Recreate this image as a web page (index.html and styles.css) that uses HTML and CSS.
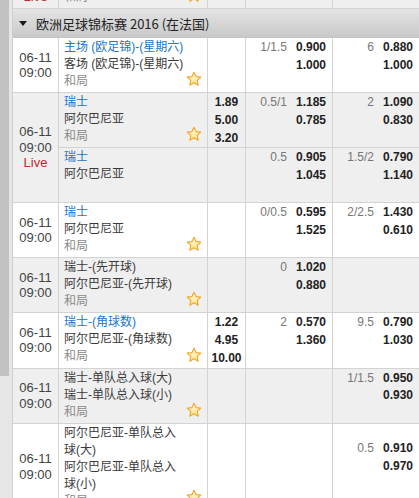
FILE: index.html
```html
<!DOCTYPE html>
<html lang="zh-CN">
<head>
<meta charset="utf-8">
<title>赛事列表</title>
<link rel="stylesheet" href="styles.css">
</head>
<body>
<svg class="sprite" width="0" height="0" aria-hidden="true">
  <defs>
    <linearGradient id="starfill" x1="0" y1="0" x2="0" y2="1">
      <stop offset="0" stop-color="#fffdf0"/>
      <stop offset="1" stop-color="#ffe27a"/>
    </linearGradient>
    <symbol id="star" viewBox="0 0 16 16">
      <path d="M8 1.2 L10 5.6 L14.8 6.1 L11.2 9.3 L12.2 14.2 L8 11.7 L3.8 14.2 L4.8 9.3 L1.2 6.1 L6 5.6 Z" fill="url(#starfill)" stroke="#f2a52b" stroke-width="1.1" stroke-linejoin="round"/>
    </symbol>
  </defs>
</svg>
<div class="page">
  <div class="rail"><div class="thumb"></div></div>
  <div class="table">

    <div class="row gray">
      <div class="date"><span>06-11</span><span>09:00</span><span class="live">Live</span></div>
      <div class="c team"><div class="names"><span class="home">瑞士</span><span class="away">阿尔巴尼亚</span><span class="draw">和局</span></div><svg class="star"><use href="#star"/></svg></div>
      <div class="c x12"></div>
      <div class="c odds"></div>
      <div class="c odds"></div>
    </div>

    <div class="league"><span class="tri"></span><span>欧洲足球锦标赛 2016 (在法国)</span></div>

    <div class="row">
      <div class="date"><span>06-11</span><span>09:00</span></div>
      <div class="c team"><div class="names"><span class="home">主场 (欧足锦)-(星期六)</span><span class="away">客场 (欧足锦)-(星期六)</span><span class="draw">和局</span></div><svg class="star"><use href="#star"/></svg></div>
      <div class="c x12"></div>
      <div class="c odds"><span class="hd">1/1.5</span><b>0.900</b><span></span><b>1.000</b></div>
      <div class="c odds"><span class="hd">6</span><b>0.880</b><span></span><b>1.000</b></div>
    </div>

    <div class="row gray double">
      <div class="date span2"><span>06-11</span><span>09:00</span><span class="live">Live</span></div>
      <div class="c team sub"><div class="names"><span class="home">瑞士</span><span class="away">阿尔巴尼亚</span><span class="draw">和局</span></div><svg class="star"><use href="#star"/></svg></div>
      <div class="c x12 sub"><b>1.89</b><b>5.00</b><b>3.20</b></div>
      <div class="c odds sub"><span class="hd">0.5/1</span><b>1.185</b><span></span><b>0.785</b></div>
      <div class="c odds sub"><span class="hd">2</span><b>1.090</b><span></span><b>0.830</b></div>
      <div class="c team"><div class="names"><span class="home">瑞士</span><span class="away">阿尔巴尼亚</span></div></div>
      <div class="c x12"></div>
      <div class="c odds"><span class="hd">0.5</span><b>0.905</b><span></span><b>1.045</b></div>
      <div class="c odds"><span class="hd">1.5/2</span><b>0.790</b><span></span><b>1.140</b></div>
    </div>

    <div class="row">
      <div class="date"><span>06-11</span><span>09:00</span></div>
      <div class="c team"><div class="names"><span class="home">瑞士</span><span class="away">阿尔巴尼亚</span><span class="draw">和局</span></div><svg class="star"><use href="#star"/></svg></div>
      <div class="c x12"></div>
      <div class="c odds"><span class="hd">0/0.5</span><b>0.595</b><span></span><b>1.525</b></div>
      <div class="c odds"><span class="hd">2/2.5</span><b>1.430</b><span></span><b>0.610</b></div>
    </div>

    <div class="row gray">
      <div class="date"><span>06-11</span><span>09:00</span></div>
      <div class="c team"><div class="names"><span class="away">瑞士-(先开球)</span><span class="away">阿尔巴尼亚-(先开球)</span><span class="draw">和局</span></div><svg class="star"><use href="#star"/></svg></div>
      <div class="c x12"></div>
      <div class="c odds"><span class="hd">0</span><b>1.020</b><span></span><b>0.880</b></div>
      <div class="c odds"></div>
    </div>

    <div class="row">
      <div class="date"><span>06-11</span><span>09:00</span></div>
      <div class="c team"><div class="names"><span class="home">瑞士-(角球数)</span><span class="away">阿尔巴尼亚-(角球数)</span><span class="draw">和局</span></div><svg class="star"><use href="#star"/></svg></div>
      <div class="c x12"><b>1.22</b><b>4.95</b><b>10.00</b></div>
      <div class="c odds"><span class="hd">2</span><b>0.570</b><span></span><b>1.360</b></div>
      <div class="c odds"><span class="hd">9.5</span><b>0.790</b><span></span><b>1.030</b></div>
    </div>

    <div class="row gray">
      <div class="date"><span>06-11</span><span>09:00</span></div>
      <div class="c team"><div class="names"><span class="away">瑞士-单队总入球(大)</span><span class="away">瑞士-单队总入球(小)</span><span class="draw">和局</span></div><svg class="star"><use href="#star"/></svg></div>
      <div class="c x12"></div>
      <div class="c odds"></div>
      <div class="c odds"><span class="hd">1/1.5</span><b>0.950</b><span></span><b>0.930</b></div>
    </div>

    <div class="row">
      <div class="date"><span>06-11</span><span>09:00</span></div>
      <div class="c team"><div class="names"><span class="away">阿尔巴尼亚-单队总入<br>球(大)</span><span class="away">阿尔巴尼亚-单队总入<br>球(小)</span><span class="draw">和局</span></div><svg class="star"><use href="#star"/></svg></div>
      <div class="c x12"></div>
      <div class="c odds"></div>
      <div class="c odds mid"><span class="hd">0.5</span><b>0.910</b><span></span><b>0.970</b><span></span><span>&nbsp;</span></div>
    </div>

  </div>
</div>
</body>
</html>
```

FILE: styles.css
```css
html, body {
  margin: 0;
  padding: 0;
  overflow: hidden;
  background: #ffffff;
}

.sprite {
  display: block;
  width: 0;
  height: 0;
  overflow: hidden;
}

.page {
  display: flex;
  align-items: flex-start;
  width: 419px;
  height: 498px;
  overflow: hidden;
  background: #ebebeb;
}

.rail {
  width: 12px;
  flex: none;
  align-self: stretch;
  background: #e6e6e6;
}

.thumb {
  width: 9px;
  height: 376px;
  background: #c2c2c2;
}

.table {
  width: 407px;
  flex: none;
  margin-top: -46px;
  border-left: 1px solid #cfcfcf;
  background: #ffffff;
  font-family: "Liberation Sans", "Noto Sans CJK SC", sans-serif;
  font-size: 12px;
  color: #333;
}

.row {
  display: grid;
  grid-template-columns: 45px 149px 38px 87px 87px;
  grid-auto-rows: minmax(54px, auto);
  border-bottom: 1px solid #d3d3d3;
  background: #ffffff;
}

.row.gray {
  background: #efefef;
}

.c {
  border-left: 1px solid #d3d3d3;
}

.sub {
  border-bottom: 1px solid #d3d3d3;
}

.span2 {
  grid-row: 1 / 3;
}

.date {
  display: flex;
  flex-direction: column;
  align-items: center;
  justify-content: center;
  font-family: "Liberation Sans", sans-serif;
  font-size: 13px;
  line-height: 15.5px;
  color: #444;
}

.live {
  color: #c3262c;
}

.team {
  display: flex;
  padding: 1px 5px 0 5px;
  font-family: "Liberation Sans", "Noto Sans CJK SC", sans-serif;
  font-size: 12px;
  line-height: 17px;
}

.names {
  flex: 1;
  display: flex;
  flex-direction: column;
}

.home {
  color: #2074cb;
}

.away {
  color: #3a3a3a;
}

.draw {
  color: #8a8a8a;
}

.star {
  flex: none;
  align-self: flex-end;
  width: 16px;
  height: 16px;
  margin-bottom: 5px;
}

.x12 {
  display: flex;
  flex-direction: column;
  align-items: center;
  padding-top: 1px;
  line-height: 17.75px;
  font-weight: bold;
  color: #222;
}

.odds {
  display: grid;
  grid-template-columns: 1fr auto;
  column-gap: 9px;
  align-content: start;
  padding: 1px 6px 0 0;
  line-height: 17.5px;
  text-align: right;
}

.odds.mid {
  align-content: center;
  padding-top: 0;
}

.odds b {
  font-weight: bold;
  color: #222;
}

.hd {
  color: #777;
}

.league {
  display: flex;
  align-items: center;
  gap: 9px;
  height: 28px;
  padding-left: 6px;
  border-bottom: 1px solid #c4c4c4;
  background: linear-gradient(#e4e4e4, #c9c9c9);
  font-family: "Noto Sans CJK SC", sans-serif;
  font-size: 13px;
  color: #222;
}

.tri {
  width: 0;
  height: 0;
  border-left: 4px solid transparent;
  border-right: 4px solid transparent;
  border-top: 5px solid #1a1a1a;
}
```
